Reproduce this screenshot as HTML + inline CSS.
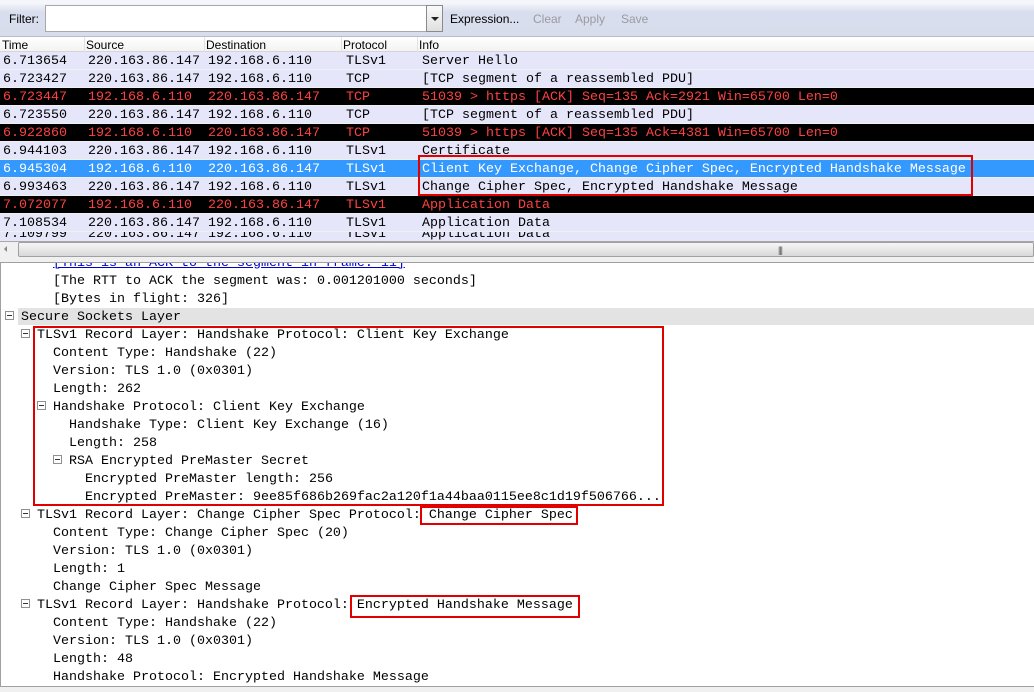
<!DOCTYPE html>
<html><head><meta charset="utf-8"><style>
*{margin:0;padding:0;box-sizing:border-box}
body{width:1034px;height:692px;overflow:hidden;background:#f0f0f0;position:relative;font-family:"Liberation Mono","Noto Sans CJK SC",monospace;font-size:13.33px}
.abs{position:absolute}
.bar{left:0;top:0;width:1034px;height:37px;background:linear-gradient(#f4f6fb 0,#f4f6fb 3px,#d9deee 12px,#d8ddec 100%);border-bottom:1px solid #b8bcc8;font-family:"Liberation Sans",sans-serif;font-size:12px}
.hdr{left:0;top:37px;width:1034px;height:15px;background:linear-gradient(#fff,#f3f3f3);border-bottom:1px solid #d5d5d5;font-family:"Liberation Sans",sans-serif;font-size:12px;line-height:17px}
.hdr span{position:absolute;top:0}
.hdr i{position:absolute;top:0;width:1px;height:15px;background:#e2e2e2}
.row{position:absolute;left:0;width:1034px;height:17px;background:#e6e6fa;line-height:19px;white-space:pre;color:#000}
.row span{position:absolute;top:0}
.blk{background:#000;color:#ff4040}
.sel{background:#3399ff;color:#fff}
.pane{left:0;top:262px;width:1034px;height:425px;background:#fff;border-top:1px solid #a0a0a0;border-left:1px solid #a0a0a0;border-bottom:1px solid #a0a0a0;overflow:hidden}
.ln{position:absolute;height:18px;line-height:22px;white-space:pre}
.ex{position:absolute;width:9px;height:9px;border:1px solid #909090;background:#fff}
.ex:after{content:"";position:absolute;left:1px;top:3px;width:5px;height:1px;background:#333}
.box{position:absolute;border:2px solid #e00000}
</style></head><body>
<div class="abs bar">
 <div class="abs" style="left:9px;top:12px">Filter:</div>
 <div class="abs" style="left:45px;top:5px;width:383px;height:27px;background:#fff;border:1px solid #a8a8a8"></div>
 <div class="abs" style="left:426px;top:5px;width:17px;height:27px;background:linear-gradient(#fafafa,#e0e0e0);border:1px solid #8a8a8a"></div>
 <div class="abs" style="left:431px;top:17px;width:0;height:0;border-left:4px solid transparent;border-right:4px solid transparent;border-top:4px solid #222"></div>
 <div class="abs" style="left:450px;top:12px">Expression...</div>
 <div class="abs" style="left:533px;top:12px;color:#9a9aa2">Clear</div>
 <div class="abs" style="left:575px;top:12px;color:#9a9aa2">Apply</div>
 <div class="abs" style="left:621px;top:12px;color:#9a9aa2">Save</div>
</div>
<div class="abs hdr">
 <span style="left:2px">Time</span><i style="left:84px"></i>
 <span style="left:86px">Source</span><i style="left:204px"></i>
 <span style="left:206px">Destination</span><i style="left:341px"></i>
 <span style="left:343px">Protocol</span><i style="left:417px"></i>
 <span style="left:419px">Info</span>
</div>
<div class="row" style="top:52px"><span style="left:3px">6.713654</span><span style="left:88px">220.163.86.147</span><span style="left:208px">192.168.6.110</span><span style="left:346px">TLSv1</span><span style="left:422px">Server Hello</span></div>
<div class="row" style="top:70px"><span style="left:3px">6.723427</span><span style="left:88px">220.163.86.147</span><span style="left:208px">192.168.6.110</span><span style="left:346px">TCP</span><span style="left:422px">[TCP segment of a reassembled PDU]</span></div>
<div class="row blk" style="top:88px"><span style="left:3px">6.723447</span><span style="left:88px">192.168.6.110</span><span style="left:208px">220.163.86.147</span><span style="left:346px">TCP</span><span style="left:422px">51039 &gt; https [ACK] Seq=135 Ack=2921 Win=65700 Len=0</span></div>
<div class="row" style="top:106px"><span style="left:3px">6.723550</span><span style="left:88px">220.163.86.147</span><span style="left:208px">192.168.6.110</span><span style="left:346px">TCP</span><span style="left:422px">[TCP segment of a reassembled PDU]</span></div>
<div class="row blk" style="top:124px"><span style="left:3px">6.922860</span><span style="left:88px">192.168.6.110</span><span style="left:208px">220.163.86.147</span><span style="left:346px">TCP</span><span style="left:422px">51039 &gt; https [ACK] Seq=135 Ack=4381 Win=65700 Len=0</span></div>
<div class="row" style="top:142px"><span style="left:3px">6.944103</span><span style="left:88px">220.163.86.147</span><span style="left:208px">192.168.6.110</span><span style="left:346px">TLSv1</span><span style="left:422px">Certificate</span></div>
<div class="row sel" style="top:160px"><span style="left:3px">6.945304</span><span style="left:88px">192.168.6.110</span><span style="left:208px">220.163.86.147</span><span style="left:346px">TLSv1</span><span style="left:422px">Client Key Exchange, Change Cipher Spec, Encrypted Handshake Message</span></div>
<div class="row" style="top:178px"><span style="left:3px">6.993463</span><span style="left:88px">220.163.86.147</span><span style="left:208px">192.168.6.110</span><span style="left:346px">TLSv1</span><span style="left:422px">Change Cipher Spec, Encrypted Handshake Message</span></div>
<div class="row blk" style="top:196px"><span style="left:3px">7.072077</span><span style="left:88px">192.168.6.110</span><span style="left:208px">220.163.86.147</span><span style="left:346px">TLSv1</span><span style="left:422px">Application Data</span></div>
<div class="row" style="top:214px"><span style="left:3px">7.108534</span><span style="left:88px">220.163.86.147</span><span style="left:208px">192.168.6.110</span><span style="left:346px">TLSv1</span><span style="left:422px">Application Data</span></div>
<div class="row" style="top:232px;height:9px;overflow:hidden"><span style="left:3px;top:-7px">7.109799</span><span style="left:88px;top:-7px">220.163.86.147</span><span style="left:208px;top:-7px">192.168.6.110</span><span style="left:346px;top:-7px">TLSv1</span><span style="left:422px;top:-7px">Application Data</span></div>
<div class="box" style="left:418px;top:155px;width:555px;height:41px"></div>
<div class="abs" style="left:0;top:241px;width:1034px;height:16px;background:#f0f0f0;border-top:1px solid #a8a8a8"></div>
<div class="abs" style="left:4px;top:246px;width:0;height:0;border-top:3px solid transparent;border-bottom:3px solid transparent;border-right:3px solid #888"></div>
<div class="abs" style="left:18px;top:242px;width:1016px;height:15px;background:linear-gradient(#f6f6f6,#d8d8d8);border:1px solid #a0a0a0;border-radius:2px"></div>
<div class="abs" style="left:778px;top:245px;font-family:'Liberation Sans',sans-serif;font-size:9px;color:#555;letter-spacing:-1px">|||</div>
<div class="abs pane">
 <div class="ln" style="left:52px;top:-10px;color:#00c;text-decoration:underline">[This is an ACK to the segment in frame: 11]</div>
 <div class="ln" style="left:52px;top:8px">[The RTT to ACK the segment was: 0.001201000 seconds]</div>
 <div class="ln" style="left:52px;top:26px">[Bytes in flight: 326]</div>
 <div class="abs" style="left:17px;top:45px;width:1017px;height:17px;background:#e3e3e3"></div>
 <div class="ex" style="left:4px;top:48px"></div>
 <div class="ln" style="left:20px;top:44px">Secure Sockets Layer</div>
 <div class="ex" style="left:20px;top:66px"></div>
 <div class="ln" style="left:36px;top:62px">TLSv1 Record Layer: Handshake Protocol: Client Key Exchange</div>
 <div class="ln" style="left:52px;top:80px">Content Type: Handshake (22)</div>
 <div class="ln" style="left:52px;top:98px">Version: TLS 1.0 (0x0301)</div>
 <div class="ln" style="left:52px;top:116px">Length: 262</div>
 <div class="ex" style="left:36px;top:138px"></div>
 <div class="ln" style="left:52px;top:134px">Handshake Protocol: Client Key Exchange</div>
 <div class="ln" style="left:68px;top:152px">Handshake Type: Client Key Exchange (16)</div>
 <div class="ln" style="left:68px;top:170px">Length: 258</div>
 <div class="ex" style="left:52px;top:192px"></div>
 <div class="ln" style="left:68px;top:188px">RSA Encrypted PreMaster Secret</div>
 <div class="ln" style="left:84px;top:206px">Encrypted PreMaster length: 256</div>
 <div class="ln" style="left:84px;top:224px">Encrypted PreMaster: 9ee85f686b269fac2a120f1a44baa0115ee8c1d19f506766...</div>
 <div class="box" style="left:32px;top:63px;width:631px;height:180px"></div>
 <div class="ex" style="left:20px;top:246px"></div>
 <div class="ln" style="left:36px;top:242px">TLSv1 Record Layer: Change Cipher Spec Protocol: Change Cipher Spec</div>
 <div class="box" style="left:419px;top:243px;width:158px;height:19px"></div>
 <div class="ln" style="left:52px;top:260px">Content Type: Change Cipher Spec (20)</div>
 <div class="ln" style="left:52px;top:278px">Version: TLS 1.0 (0x0301)</div>
 <div class="ln" style="left:52px;top:296px">Length: 1</div>
 <div class="ln" style="left:52px;top:314px">Change Cipher Spec Message</div>
 <div class="ex" style="left:20px;top:336px"></div>
 <div class="ln" style="left:36px;top:332px">TLSv1 Record Layer: Handshake Protocol: Encrypted Handshake Message</div>
 <div class="box" style="left:349px;top:332px;width:230px;height:23px"></div>
 <div class="ln" style="left:52px;top:350px">Content Type: Handshake (22)</div>
 <div class="ln" style="left:52px;top:368px">Version: TLS 1.0 (0x0301)</div>
 <div class="ln" style="left:52px;top:386px">Length: 48</div>
 <div class="ln" style="left:52px;top:404px">Handshake Protocol: Encrypted Handshake Message</div>
</div>
</body></html>
